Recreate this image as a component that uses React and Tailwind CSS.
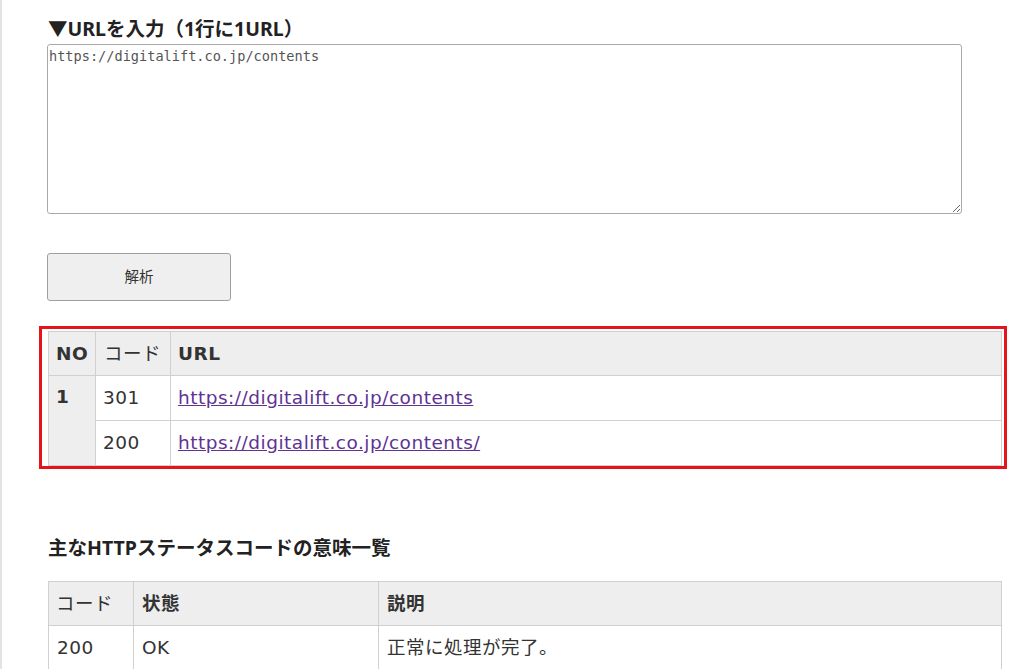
import React from "react";

const font = { fontFamily: '"Noto Sans", "Noto Sans CJK JP", sans-serif' };
const tfont = { fontFamily: '"DejaVu Sans", "Noto Sans CJK JP", sans-serif', letterSpacing: "0.5px" };

export default function App() {
  return (
    <div
      className="w-[1024px] h-[669px] overflow-hidden bg-white border-l-2 border-[#e3e3e3] text-[#333]"
      style={font}
    >
      <div className="pl-[46px] pr-[22px] pt-[16px]">
        <h2 className="text-[19.5px] leading-[26px] font-bold text-[#222]">
          ▼URLを入力（1行に1URL）
        </h2>
        <textarea
          defaultValue="https://digitalift.co.jp/contents"
          className="block mt-[2px] w-[915px] h-[170px] ml-[-1px] border border-[#a9a9a9] rounded-[3px] px-[1px] pt-[3px] text-[13.6px] leading-[17px] text-[#555] resize-y outline-none"
          style={{ fontFamily: '"DejaVu Sans Mono", monospace' }}
        />
        <button className="block mt-[39px] ml-[-1px] w-[184px] h-[48px] bg-[#efefef] border border-[#a0a0a0] rounded-[3px] text-[14.5px] text-[#333]">
          解析
        </button>

        <div className="relative mt-[30px]">
          <div className="absolute left-[-9px] top-[-5px] w-[968px] h-[143px] border-[3px] border-[#e5141b] pointer-events-none" />
          <table className="w-[954px] border-collapse text-[18.5px] leading-[24px]" style={tfont}>
            <tbody>
              <tr className="h-[44px] bg-[#eeeeee]">
                <th className="w-[47px] border border-[#d0d0d0] text-left pl-[7px] font-bold">NO</th>
                <th className="w-[75px] border border-[#d0d0d0] text-left pl-[8px] font-normal">コード</th>
                <th className="border border-[#d0d0d0] text-left pl-[7px] font-bold">URL</th>
              </tr>
              <tr className="h-[45px]">
                <td rowSpan={2} className="bg-[#eeeeee] border border-[#d0d0d0] align-top pl-[7px] pt-[9px] font-bold">1</td>
                <td className="border border-[#d0d0d0] pl-[7px]">301</td>
                <td className="border border-[#d0d0d0] pl-[7px]">
                  <a href="#" className="underline text-[#5e3393]">https://digitalift.co.jp/contents</a>
                </td>
              </tr>
              <tr className="h-[45px]">
                <td className="border border-[#d0d0d0] pl-[7px]">200</td>
                <td className="border border-[#d0d0d0] pl-[7px]">
                  <a href="#" className="underline text-[#5e3393]">https://digitalift.co.jp/contents/</a>
                </td>
              </tr>
            </tbody>
          </table>
        </div>

        <h3 className="mt-[70px] text-[19.5px] leading-[24px] font-bold text-[#222]">
          主なHTTPステータスコードの意味一覧
        </h3>
        <table className="mt-[21px] w-[954px] border-collapse text-[18.5px] leading-[24px]" style={tfont}>
          <tbody>
            <tr className="h-[44px] bg-[#eeeeee]">
              <th className="w-[85px] border border-[#d0d0d0] text-left pl-[7px] font-normal">コード</th>
              <th className="w-[245px] border border-[#d0d0d0] text-left pl-[8px] font-bold">状態</th>
              <th className="border border-[#d0d0d0] text-left pl-[8px] font-bold">説明</th>
            </tr>
            <tr className="h-[45px]">
              <td className="border border-[#d0d0d0] pl-[8px]">200</td>
              <td className="border border-[#d0d0d0] pl-[8px]">OK</td>
              <td className="border border-[#d0d0d0] pl-[8px]">正常に処理が完了。</td>
            </tr>
          </tbody>
        </table>
      </div>
    </div>
  );
}
